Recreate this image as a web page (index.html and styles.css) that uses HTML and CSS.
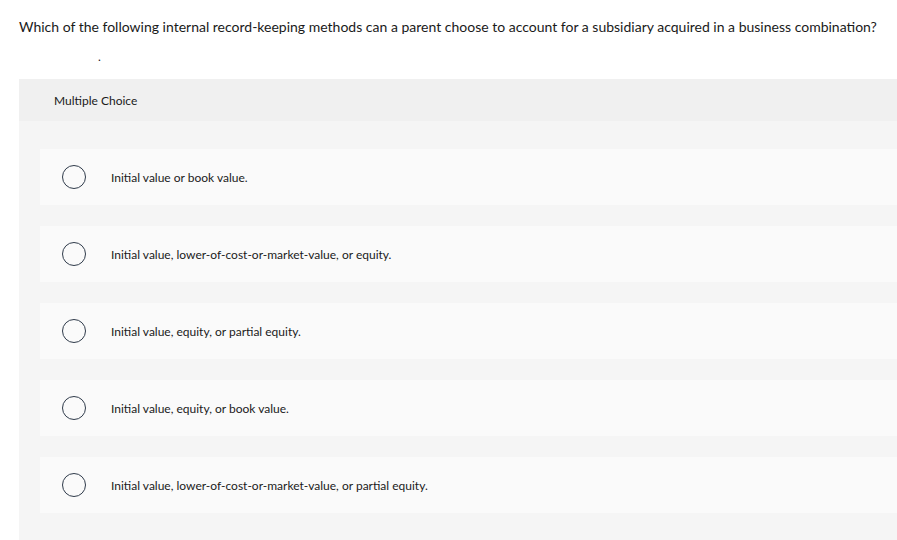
FILE: index.html
```html
<!DOCTYPE html>
<html>
<head>
<meta charset="utf-8">
<link rel="stylesheet" href="styles.css">
</head>
<body>
<div class="page">
  <p class="question">Which of the following internal record-keeping methods can a parent choose to account for a subsidiary acquired in a business combination?</p>
  <p class="dot">.</p>
  <div class="mc">
    <div class="mc-header">Multiple Choice</div>
    <div class="options">
      <div class="option"><span class="radio"></span><span class="label">Initial value or book value.</span></div>
      <div class="option"><span class="radio"></span><span class="label">Initial value, lower-of-cost-or-market-value, or equity.</span></div>
      <div class="option"><span class="radio"></span><span class="label">Initial value, equity, or partial equity.</span></div>
      <div class="option"><span class="radio"></span><span class="label">Initial value, equity, or book value.</span></div>
      <div class="option"><span class="radio"></span><span class="label">Initial value, lower-of-cost-or-market-value, or partial equity.</span></div>
    </div>
  </div>
</div>
</body>
</html>
```

FILE: styles.css
```css
html, body {
  margin: 0;
  padding: 0;
  background: #ffffff;
  overflow: hidden;
}
.page {
  padding: 0 0 0 19px;
  font-family: "Lato", "Liberation Sans", sans-serif;
  color: #1a1a1a;
}
.question {
  margin: 0;
  padding-top: 18px;
  font-size: 14px;
  line-height: 17px;
  white-space: nowrap;
}
.dot {
  margin: 0;
  padding: 16px 0 0 79px;
  height: 44px;
  line-height: 12px;
  font-size: 12px;
  box-sizing: border-box;
}
.mc {
  background: #f5f5f5;
  height: 470px;
}
.mc-header {
  background: #f0f0f0;
  height: 42px;
  display: flex;
  align-items: center;
  padding-left: 35px;
  font-size: 12px;
}
.options {
  display: flex;
  flex-direction: column;
  gap: 21px;
  padding: 28px 0 0 21px;
}
.option {
  background: #fafafa;
  height: 56px;
  display: flex;
  align-items: center;
  padding-left: 22px;
  font-size: 12px;
}
.radio {
  box-sizing: border-box;
  width: 24px;
  height: 24px;
  border: 1px solid #2f3a4a;
  border-radius: 50%;
  flex: none;
}
.label {
  margin-left: 25px;
}
```
